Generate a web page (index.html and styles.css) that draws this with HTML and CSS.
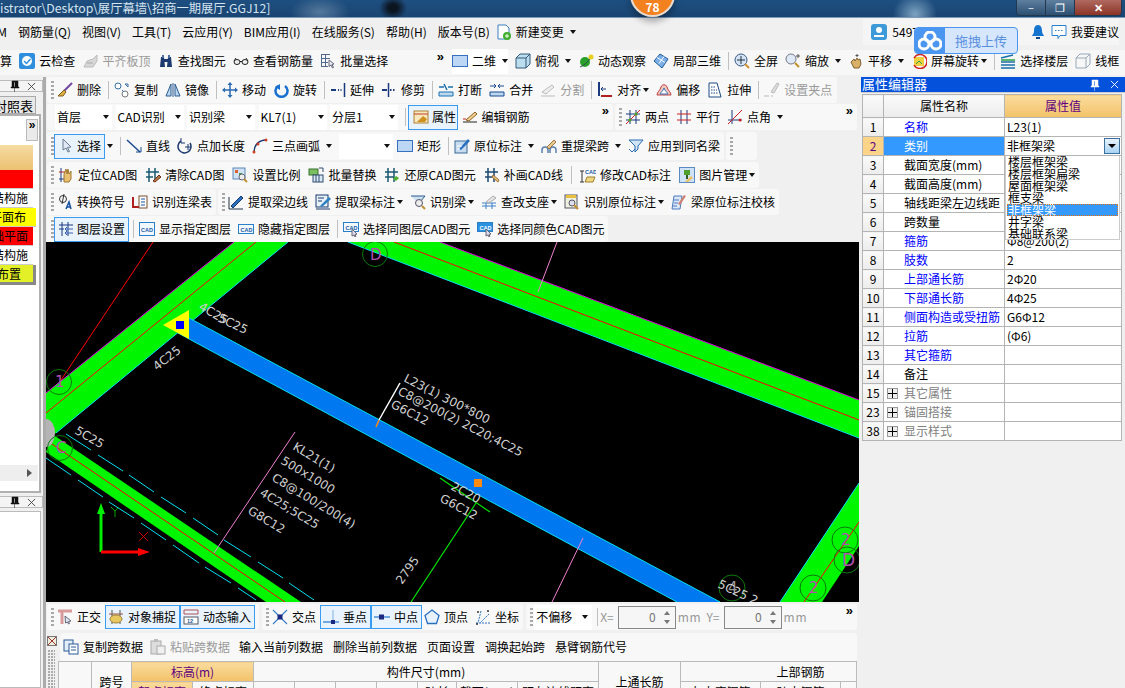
FILE: index.html
```html
<!DOCTYPE html>
<html lang="zh">
<head>
<meta charset="utf-8">
<title>GGJ12</title>
<link rel="stylesheet" href="styles.css">
</head>
<body>
<svg class="sprite" aria-hidden="true">
<symbol id="user" viewBox="0 0 16 16"><rect width="16" height="16" rx="3" fill="#3d9ad8"/><circle cx="8" cy="6" r="3" fill="#fff"/><path d="M3 13h10v-2H3z" fill="#fff"/></symbol>
<symbol id="doc" viewBox="0 0 16 16"><path d="M2 1h8l3 3v11H2z" fill="#fff" stroke="#3a7fc0"/><circle cx="11" cy="12" r="4" fill="#42b02c"/><path d="M9 12h4M11 10v4" stroke="#fff"/></symbol>
<symbol id="bell" viewBox="0 0 16 16"><path d="M8 1c3 0 4 3 4 6 0 3 2 4 2 5H2c0-1 2-2 2-5 0-3 1-6 4-6z" fill="#1474d0"/><rect x="6" y="13" width="4" height="2" fill="#0c4a90"/></symbol>
<symbol id="msg" viewBox="0 0 16 16"><path d="M1 1.500h14v10H9l-2 3v-3H1z" fill="#fff" stroke="#2a80d0"/><path d="M4 6.500h8" stroke="#2a80d0" stroke-dasharray="1.500 1.500"/></symbol>
<symbol id="chk" viewBox="0 0 16 16"><rect width="16" height="16" rx="2" fill="#2f8fdc"/><circle cx="8" cy="8" r="5" fill="#fff"/><path d="M5 8l2.500 2.500L11.500 6" fill="none" stroke="#2f8fdc" stroke-width="1.500"/></symbol>
<symbol id="flush" viewBox="0 0 16 16"><path d="M1 14l3-6 6-2 4-4v6l-4 6z" fill="#d8d8d8" stroke="#bbb"/><path d="M4 10h6" stroke="#aaa"/></symbol>
<symbol id="binoc" viewBox="0 0 16 16"><path d="M2 14l1-10h3l1 10zM9 14l1-10h3l1 10z" fill="#1c3a70"/><rect x="6" y="6" width="4" height="3" fill="#1c3a70"/><rect x="4" y="2" width="2" height="3" fill="#4a70a8"/><rect x="10" y="2" width="2" height="3" fill="#4a70a8"/></symbol>
<symbol id="glass" viewBox="0 0 16 16"><ellipse cx="4" cy="9" rx="3" ry="2.500" fill="#eee" stroke="#222"/><ellipse cx="12" cy="9" rx="3" ry="2.500" fill="#eee" stroke="#222"/><path d="M7 8.500h2M1 8l2-3M15 8l-2-3" stroke="#222"/></symbol>
<symbol id="batch" viewBox="0 0 16 16"><path d="M1 1.500h9M1 5.500h9M1 9.500h7M1 13.500h7M1.500 1v13M5.500 1v13" stroke="#51678c" fill="none"/><path d="M9 7l5 4-2 .5 1.500 3-1 .5-1.500-3-2 1.500z" fill="#e8eef8" stroke="#667"/></symbol>
<symbol id="rect" viewBox="0 0 16 16"><rect x=".5" y="2.500" width="15" height="11" fill="#bcd6f4" stroke="#3670c0"/></symbol>
<symbol id="cube" viewBox="0 0 16 16"><path d="M1 5l4-4h10v10l-4 4H1z" fill="#bcdcf0" stroke="#345a78"/><path d="M1 5h10v10M11 5l4-4" fill="none" stroke="#345a78"/></symbol>
<symbol id="orbit" viewBox="0 0 16 16"><circle cx="7" cy="9" r="5" fill="#2aa02a"/><path d="M2 14C6 13 12 7 14 2" stroke="#345" fill="none"/><circle cx="13" cy="4" r="2.500" fill="#e8d020"/></symbol>
<symbol id="local" viewBox="0 0 16 16"><path d="M1 8l6-7 8 5-6 9z" fill="#7ab0e8" stroke="#245a98"/><path d="M4 4.500l8 5M6 10.500l5-7" stroke="#fff"/></symbol>
<symbol id="full" viewBox="0 0 16 16"><circle cx="7" cy="7" r="6" fill="#d4e4f4" stroke="#3a5a88"/><path d="M7 3v8M3 7h8" stroke="#234"/><path d="M11 11l4 4" stroke="#d09030" stroke-width="2"/></symbol>
<symbol id="zoom" viewBox="0 0 16 16"><circle cx="6" cy="6" r="5" fill="#dfeaf6" stroke="#778"/><path d="M10 10l4 4" stroke="#c09020" stroke-width="2"/><path d="M13 1v4M11 3h4" stroke="#555"/></symbol>
<symbol id="pan" viewBox="0 0 16 16"><path d="M3 9l3-3 1 2 2-3 1 2 2-1 1 5-2 4H6z" fill="#d8b068" stroke="#806030"/><path d="M9 1v3M7.500 2.500h3" stroke="#555"/></symbol>
<symbol id="rot" viewBox="0 0 16 16"><rect x="3" y="4" width="10" height="9" fill="#f0d040"/><path d="M3 5a7 7 0 1 1 0 7" fill="none" stroke="#d02020" stroke-width="1.500"/><path d="M5 11l3-3 3 3" stroke="#30a040" fill="none"/></symbol>
<symbol id="floors" viewBox="0 0 16 16"><path d="M1 5l12-3M1 9h14M1 12h14M1 15h14" stroke="#1a70a8" stroke-width="1.500"/><path d="M1 7h14" stroke="#2aa040" stroke-width="1.500"/></symbol>
<symbol id="wire" viewBox="0 0 16 16"><path d="M1 5l4-4h10v10l-4 4H1zM1 5h10v10M11 5l4-4" fill="none" stroke="#98a8b8"/></symbol>
<symbol id="broom" viewBox="0 0 16 16"><path d="M15 1L7 9" stroke="#7048a0" stroke-width="2"/><path d="M7 8l2 2-3 4H1z" fill="#e0b040" stroke="#806020"/></symbol>
<symbol id="copy" viewBox="0 0 16 16"><circle cx="4" cy="4" r="3" fill="#fff" stroke="#3a70a8"/><circle cx="11" cy="12" r="3" fill="#fff" stroke="#777"/><path d="M8 8l2 2M11 2l3 3v-3z" stroke="#3a70a8" fill="none"/></symbol>
<symbol id="mirror" viewBox="0 0 16 16"><path d="M6 2v12H1zM10 2v12h5z" fill="#bcd8f0" stroke="#2a5a90"/><path d="M8 1v14" stroke="#2a5a90"/></symbol>
<symbol id="move" viewBox="0 0 16 16"><path d="M8 0l2.500 3h-5zM8 16l2.500-3h-5zM0 8l3-2.500v5zM16 8l-3-2.500v5z" fill="#2a6ab0"/><path d="M8 3v10M3 8h10" stroke="#2a6ab0" stroke-width="1.500"/></symbol>
<symbol id="rotate" viewBox="0 0 16 16"><path d="M12 4a6 6 0 1 1-7 0" fill="none" stroke="#1a70d0" stroke-width="2.500"/><path d="M2 5l5-3v6z" fill="#1a70d0"/></symbol>
<symbol id="extend" viewBox="0 0 16 16"><path d="M14.500 1v14" stroke="#1a3a80" stroke-width="1.500"/><path d="M1 8h5M8 8h1M10.500 8h1" stroke="#1a3a80" stroke-width="2"/></symbol>
<symbol id="trim" viewBox="0 0 16 16"><path d="M7.500 1v14" stroke="#1a3a80" stroke-width="1.500"/><path d="M1 8h5M9 8h1.500M12 8h1.500" stroke="#1a3a80" stroke-width="2"/></symbol>
<symbol id="brk" viewBox="0 0 16 16"><path d="M1 10h14v4H1z" fill="#bcd8f0" stroke="#1a70b0"/><path d="M1 5h5M10 5h5M6 2l3 6" stroke="#1a70b0" stroke-width="1.500"/></symbol>
<symbol id="merge" viewBox="0 0 16 16"><path d="M1 10h14v4H1z" fill="#bcd8f0" stroke="#1a4a90"/><path d="M1 4h5M10 4h5M5 2l2 2-2 2M11 2L9 4l2 2" stroke="#1a4a90" fill="none"/></symbol>
<symbol id="split" viewBox="0 0 16 16"><path d="M1 14h14M2 10l10-7 2 2-8 7z" fill="#eee" stroke="#bbb"/></symbol>
<symbol id="align" viewBox="0 0 16 16"><path d="M2 0v14" stroke="#1a3a80" stroke-width="2"/><path d="M4 14h11" stroke="#b02020" stroke-width="2"/><path d="M9 7H4l2-2M4 7l2 2" stroke="#1a3a80" fill="none"/></symbol>
<symbol id="offset" viewBox="0 0 16 16"><path d="M1 13c0-3 3-4 4-8 1-3 5-3 6 0 1 4 4 5 4 8z" fill="#f0c8c0" stroke="#c04040"/><path d="M4 12c1-2 3-3 4-6 1 3 3 4 4 6z" fill="#fff" stroke="#3a70b0"/></symbol>
<symbol id="stretch" viewBox="0 0 16 16"><path d="M2 1h8l4 14H2z" fill="#fff" stroke="#1a4a80"/><path d="M4 5h5M4 8h6M4 11h7" stroke="#1a4a80" stroke-dasharray="1.500 1"/></symbol>
<symbol id="grip2" viewBox="0 0 16 16"><path d="M0 14h5M7 14h2M10 11l5-9-2-1-6 9z" fill="#ddd" stroke="#bbb"/></symbol>
<symbol id="attr" viewBox="0 0 16 16"><rect x="1" y="2" width="14" height="12" fill="#f8e8c0" stroke="#b08030"/><path d="M1 5h14" stroke="#c04020"/><path d="M4 13l6-6 4 3-2 3z" fill="#d09020"/></symbol>
<symbol id="pen" viewBox="0 0 16 16"><path d="M1 13h14" stroke="#222"/><path d="M4 11l9-8 2 2-8 7z" fill="#f0d090" stroke="#906020"/><path d="M1 10h3" stroke="#c02020"/></symbol>
<symbol id="p2" viewBox="0 0 16 16"><path d="M1 5h14M1 11h14M5 1v14M11 1v14" stroke="#1a3a80"/><path d="M1 15L15 1" stroke="#d02020"/><circle cx="5" cy="11" r="1.500" fill="#50a020"/><circle cx="11" cy="5" r="1.500" fill="#50a020"/></symbol>
<symbol id="par" viewBox="0 0 16 16"><path d="M5 1v14M11 1v14" stroke="#1a3a80"/><path d="M1 5h14M1 11h14" stroke="#d02020"/></symbol>
<symbol id="ang" viewBox="0 0 16 16"><path d="M5 1v14M1 11h14" stroke="#1a3a80"/><path d="M1 15L15 1" stroke="#d02020"/><circle cx="13" cy="11" r="1.500" fill="#d02020"/></symbol>
<symbol id="cur" viewBox="0 0 16 16"><path d="M4 1l8 8-3.500.5 2 4-1.500.5-2-4L4 12z" fill="#dfe8f4" stroke="#6a7a90"/></symbol>
<symbol id="line" viewBox="0 0 16 16"><path d="M1 2l13 12" stroke="#1a4a90" stroke-width="1.500"/><path d="M10 14h5V9" stroke="#1a4a90" fill="none"/></symbol>
<symbol id="ptl" viewBox="0 0 16 16"><path d="M13 5a6.500 6.500 0 1 1-9-2" fill="none" stroke="#1a3a70" stroke-width="1.500"/><path d="M4 0v5h4M8 9h6M11 6v6" stroke="#1a3a70" fill="none"/></symbol>
<symbol id="arc" viewBox="0 0 16 16"><path d="M2 14C2 7 7 2 14 2" fill="none" stroke="#1a3a70" stroke-width="1.500"/><circle cx="2" cy="14" r="1.500" fill="#d04020"/><circle cx="6" cy="6" r="1.500" fill="#d04020"/><circle cx="14" cy="2" r="1.500" fill="#d04020"/></symbol>
<symbol id="note" viewBox="0 0 16 16"><rect x="1" y="3" width="12" height="12" fill="#c8dcf0" stroke="#3a6a98"/><path d="M5 11L14 1l2 2-9 9z" fill="#2a70c0"/><path d="M3 8h5M3 11h3" stroke="#fff"/></symbol>
<symbol id="span" viewBox="0 0 16 16"><path d="M1 15v-3a3 3 0 0 1 6 0v3M9 15v-3a3 3 0 0 1 6 0v3" fill="none" stroke="#5a80b0" stroke-width="1.500"/><path d="M6 9l7-7 2 2-7 7z" fill="#e8c890" stroke="#a07840"/></symbol>
<symbol id="funnel" viewBox="0 0 16 16"><path d="M1 2h14l-5 6v3l-3 3V8z" fill="#d0e4f6" stroke="#2a6ab0"/><path d="M1 11l3 3 3-3" fill="none" stroke="#2a6ab0"/></symbol>
<symbol id="loc" viewBox="0 0 16 16"><path d="M3 1v14M1 12h9" stroke="#1a3a80"/><path d="M1 5h6" stroke="#b02020"/><path d="M6 15V7l2-5 1 5 1-5 1 5 2-3v8l-2 3z" fill="#e8c070" stroke="#a07830"/></symbol>
<symbol id="clr" viewBox="0 0 16 16"><path d="M4 1v14M10 1v14M1 5h13M1 10h7" stroke="#1a5a70" stroke-width="1.500"/><path d="M8 14l6-6 2 2-6 5z" fill="#b07840" stroke="#703020"/></symbol>
<symbol id="scale" viewBox="0 0 16 16"><rect x="1" y="1" width="12" height="11" fill="#cfe2f6" stroke="#5a88b8"/><rect x="3" y="3" width="3" height="3" fill="#e06030"/><rect x="7" y="6" width="3" height="3" fill="#40a040"/><circle cx="10" cy="10" r="3" fill="#eee" stroke="#667"/><path d="M12 12l3 3" stroke="#c09030" stroke-width="2"/></symbol>
<symbol id="repl" viewBox="0 0 16 16"><rect x="1" y="2" width="9" height="6" fill="#7ac060" stroke="#3a7030"/><rect x="5" y="8" width="10" height="7" fill="#d8e8f4" stroke="#304a70"/><path d="M8 8v7M11 8v7" stroke="#304a70"/><path d="M11 1h4v4" fill="none" stroke="#304a70"/></symbol>
<symbol id="rest" viewBox="0 0 16 16"><path d="M4 1v14M10 1v14M1 5h13M1 10h9" stroke="#1a5a70" stroke-width="1.500"/><path d="M9 12l3-3 3 2-3 3z" fill="#50b030"/></symbol>
<symbol id="patch" viewBox="0 0 16 16"><path d="M4 1v14M10 1v14M1 5h13M1 10h9" stroke="#1a4a70" stroke-width="1.500"/><path d="M8 10l6 5 1-2-6-5z" fill="#e8c080" stroke="#a07030"/></symbol>
<symbol id="mod" viewBox="0 0 16 16"><path d="M2 4v11M0 4h4M0 15h4" stroke="#333"/><text x="5" y="7" class="ict">CAD</text><path d="M5 15l2-5h8l-2 5z" fill="#f0d880" stroke="#a08030"/></symbol>
<symbol id="pic" viewBox="0 0 16 16"><rect x=".5" y=".5" width="15" height="15" fill="#cfe2f8" stroke="#5a8ac0"/><path d="M5 3h6v5H5z" fill="#50a030"/><path d="M8 8v4" stroke="#306020" stroke-width="2"/><path d="M6 15l6-6 2 2-5 4z" fill="#f0c060"/></symbol>
<symbol id="phi" viewBox="0 0 16 16"><circle cx="6" cy="5" r="3.500" fill="none" stroke="#333"/><path d="M7 0L5 10" stroke="#333"/><path d="M9 15l3-7 2 7M10 13h3" stroke="#1a50a0" stroke-width="1.500" fill="none"/></symbol>
<symbol id="ltable" viewBox="0 0 16 16"><path d="M1 3v10h8" fill="none" stroke="#b02020" stroke-width="2"/><rect x="7" y="2" width="8" height="12" fill="#fff" stroke="#7a5030"/><path d="M9 5h4M9 8h4M9 11h4" stroke="#1a50a0"/></symbol>
<symbol id="edge" viewBox="0 0 16 16"><path d="M1 15h14M1 3v12" stroke="#234"/><path d="M3 12L13 2l2 2L5 14z" fill="#2a70c0" stroke="#1a3a70"/></symbol>
<symbol id="lbl" viewBox="0 0 16 16"><rect x="1" y="1" width="12" height="12" fill="#e8f0f8" stroke="#1a3a70"/><path d="M3 4h6M3 7h4M1 15h14" stroke="#1a3a70"/><path d="M5 12L14 3l2 2-9 8z" fill="#2a80c0"/></symbol>
<symbol id="rbeam" viewBox="0 0 16 16"><path d="M1 2h14l-5 6v3" fill="#cfe0f0" stroke="#2a5a90"/><circle cx="9" cy="9" r="3.500" fill="#eee" stroke="#556"/><path d="M12 12l3 3" stroke="#c09030" stroke-width="2"/></symbol>
<symbol id="supp" viewBox="0 0 16 16"><path d="M1 9h14M1 12h14" stroke="#3a80c8"/><path d="M5 9v6M11 9v6" stroke="#3a80c8"/><path d="M5 8l7-6 3 2-7 5z" fill="#e4e4e4" stroke="#aaa"/></symbol>
<symbol id="rorig" viewBox="0 0 16 16"><rect x="1" y="1" width="12" height="13" fill="#f0f0e0" stroke="#556"/><rect x="2" y="1" width="10" height="3" fill="#e8c040"/><circle cx="8" cy="9" r="3" fill="#dde" stroke="#556"/><path d="M10 11l4 4" stroke="#c09030" stroke-width="2"/></symbol>
<symbol id="chkb" viewBox="0 0 16 16"><path d="M3 2h8l-2 13H1z" fill="#dce8f8" stroke="#4a7ac0"/><path d="M3 6h5M3 9h4M2 12h4" stroke="#4a7ac0"/><path d="M7 10l6-9 2 1-6 9z" fill="#d08070"/></symbol>
<symbol id="layer" viewBox="0 0 16 16"><path d="M4 1v14M10 1v14" stroke="#1a3a80"/><path d="M1 4h14M1 8h5" stroke="#1a3a80"/><path d="M7 8h8M7 12h8" stroke="#3a60b0"/><path d="M9 6L7 8l2 2M9 10l-2 2 2 2" fill="none" stroke="#3a60b0"/></symbol>
<symbol id="cad1" viewBox="0 0 16 16"><rect x=".5" y="1.500" width="15" height="13" fill="#f0f7ff" stroke="#2a80c8"/><text x="2" y="11" class="ict">CAD</text></symbol>
<symbol id="cad2" viewBox="0 0 16 16"><rect x=".5" y="3.500" width="15" height="9" fill="#f0f7ff" stroke="#2a80c8"/><text x="2.500" y="10.500" class="ict">CAD</text></symbol>
<symbol id="cad3" viewBox="0 0 16 16"><rect x=".5" y="1.500" width="15" height="9" fill="#f0f7ff" stroke="#2a80c8"/><text x="2.500" y="8.500" class="ict">CAD</text><path d="M9 8l5 5-2 .5 1 2-1 .5-1-2-2 1z" fill="#dde" stroke="#667"/></symbol>
<symbol id="cad4" viewBox="0 0 16 16"><rect x=".5" y="1.500" width="15" height="9" fill="#2a90e0" stroke="#2a80c8"/><text x="2.500" y="8.500" class="ict icw">CAD</text><path d="M9 8l5 5-2 .5 1 2-1 .5-1-2-2 1z" fill="#dde" stroke="#667"/></symbol>
<symbol id="ortho" viewBox="0 0 16 16"><path d="M1 2h14M5 2v13" stroke="#d89a9a" stroke-width="3" fill="none"/><path d="M8 7l6 5-2.500.5 1 2-1 .5-1-2-2 1z" fill="#dfe8f4" stroke="#667"/></symbol>
<symbol id="snap" viewBox="0 0 16 16"><path d="M1 5h14" stroke="#a05030"/><path d="M4 1v14M12 1v14" stroke="#555"/><ellipse cx="8" cy="10" rx="6" ry="4" fill="#e8c860" stroke="#a08030"/></symbol>
<symbol id="dyn" viewBox="0 0 16 16"><path d="M1 1h14M1 5h14M1 1v4M15 1v4" stroke="#b05050" fill="none"/><rect x="1" y="8" width="14" height="7" fill="#fff" stroke="#556"/><text x="4" y="14" class="ict">12</text></symbol>
<symbol id="cross" viewBox="0 0 16 16"><path d="M1 1l14 14M15 1L1 15" stroke="#3a80c8" stroke-width="1.200"/><rect x="5.500" y="5.500" width="5" height="5" fill="#1a2a80"/></symbol>
<symbol id="perp" viewBox="0 0 16 16"><path d="M0 13h16" stroke="#4a90d8" stroke-width="1.500"/><path d="M10 1v14" stroke="#7ab0e0"/><rect x="8" y="11" width="4" height="4" fill="#1a2a80"/></symbol>
<symbol id="mid" viewBox="0 0 16 16"><path d="M0 8h16" stroke="#4a90d8" stroke-width="1.500"/><rect x="5" y="5.500" width="5" height="5" fill="#1a2a80"/></symbol>
<symbol id="vert" viewBox="0 0 16 16"><path d="M8 1l7 5.500-2.500 8h-9L1 6.500z" fill="#e8f2fc" stroke="#2a70c0" stroke-width="1.300"/></symbol>
<symbol id="coord" viewBox="0 0 16 16"><path d="M1 14h14M6 2l-3 12M14 5L5 14" stroke="#2a70c0" fill="none" stroke-dasharray="2 1"/><circle cx="3" cy="3" r="1" fill="#333"/><circle cx="13" cy="2" r="1" fill="#333"/><circle cx="2" cy="15" r="1" fill="#333"/></symbol>
<symbol id="cp" viewBox="0 0 16 16"><rect x="1" y="1" width="9" height="11" fill="#e4eefa" stroke="#2a5a98"/><rect x="6" y="5" width="9" height="10" fill="#fff" stroke="#2a5a98"/><path d="M8 8h5M8 11h5" stroke="#2a5a98"/></symbol>
<symbol id="ps" viewBox="0 0 16 16"><rect x="1" y="2" width="10" height="13" fill="#ddd" stroke="#aaa"/><rect x="7" y="7" width="8" height="8" fill="#f0f0f0" stroke="#aaa"/><rect x="4" y="0" width="4" height="3" fill="#bbb"/></symbol>
<symbol id="pin" viewBox="0 0 10 12"><path d="M2 1h6v6h1v1H1V7h1zM4 2v5h1V2zM4.500 8v4" fill="currentColor" stroke="currentColor" stroke-width=".5"/></symbol>
<symbol id="x" viewBox="0 0 10 10"><path d="M1 1l8 8M9 1L1 9" stroke="currentColor"/></symbol>
</svg>

<header class="title">
  <span class="title-text">istrator\Desktop\展厅幕墙\招商一期展厅.GGJ12]</span>
  <div class="winctl"><span class="wb">&#8211;</span><span class="wb">&#10064;</span><span class="wb wclose">&#10005;</span></div>
</header>
<div class="badge">78</div>

<nav class="menu">
  <span class="mi clip">M)</span>
  <span class="mi">钢筋量(Q)</span><span class="mi">视图(V)</span><span class="mi">工具(T)</span><span class="mi">云应用(Y)</span><span class="mi">BIM应用(I)</span><span class="mi">在线服务(S)</span><span class="mi">帮助(H)</span><span class="mi">版本号(B)</span>
  <span class="it mnew"><svg class="ic"><use href="#doc"/></svg>新建变更<i class="car"></i></span>
  <span class="menu-right">
    <svg class="ic"><use href="#user"/></svg><span>5497</span>
    <svg class="ic bellic"><use href="#bell"/></svg>
    <span class="it"><svg class="ic"><use href="#msg"/></svg>我要建议</span>
  </span>
</nav>
<div class="upload"><span class="up-logo"><svg width="24" height="20" viewBox="0 0 24 20"><circle cx="12" cy="6" r="5" fill="none" stroke="#fff" stroke-width="3"/><circle cx="6" cy="13" r="5" fill="none" stroke="#fff" stroke-width="3"/><circle cx="18" cy="13" r="5" fill="none" stroke="#fff" stroke-width="3"/></svg></span><span class="up-text">拖拽上传</span></div>

<div class="tb0">
  <span class="bar0">
    <span class="t-clip">算</span>
    <span class="it"><svg class="ic"><use href="#chk"/></svg>云检查</span>
    <span class="it off"><svg class="ic"><use href="#flush"/></svg>平齐板顶</span>
    <span class="it"><svg class="ic"><use href="#binoc"/></svg>查找图元</span>
    <span class="it"><svg class="ic"><use href="#glass"/></svg>查看钢筋量</span>
    <span class="it"><svg class="ic"><use href="#batch"/></svg>批量选择</span>
    <span class="more">»</span>
  </span>
  <span class="bar0 bar0b">
    <span class="it view2d"><svg class="ic"><use href="#rect"/></svg>二维<i class="car"></i></span>
    <span class="it"><svg class="ic"><use href="#cube"/></svg>俯视<i class="car"></i></span>
    <span class="it"><svg class="ic"><use href="#orbit"/></svg>动态观察</span>
    <span class="it"><svg class="ic"><use href="#local"/></svg>局部三维</span>
    <i class="sep"></i>
    <span class="it"><svg class="ic"><use href="#full"/></svg>全屏</span>
    <span class="it"><svg class="ic"><use href="#zoom"/></svg>缩放<i class="car"></i></span>
    <span class="it"><svg class="ic"><use href="#pan"/></svg>平移<i class="car"></i></span>
    <span class="it"><svg class="ic"><use href="#rot"/></svg>屏幕旋转<i class="car nar"></i></span>
    <i class="sep"></i>
    <span class="it"><svg class="ic"><use href="#floors"/></svg>选择楼层</span>
    <span class="it"><svg class="ic"><use href="#wire"/></svg>线框</span>
  </span>
</div>

<main class="work">
  <aside class="left">
    <div class="lhead"><svg class="pin"><use href="#pin"/></svg><svg class="xx"><use href="#x"/></svg></div>
    <div class="ltab">对照表</div>
    <div class="lbox">
      <div class="ltop"><span class="lmore">»</span></div>
      <div class="lr lr-o"></div>
      <div class="lr lr-r"></div>
      <div class="lr">结构施</div>
      <div class="lr lr-y">平面布</div>
      <div class="lr lr-r">础平面</div>
      <div class="lr">结构施</div>
      <div class="lr lr-s">布置</div>
      <div class="lsp"></div>
      <div class="lscroll"><i></i></div>
    </div>
    <div class="lhead lhead2"><svg class="pin"><use href="#pin"/></svg><svg class="xx"><use href="#x"/></svg></div>
    <div class="lbox2"></div>
  </aside>

  <section class="center">
    <div class="tb r1">
      <div class="bar">
        <i class="grip"></i>
        <span class="it"><svg class="ic"><use href="#broom"/></svg>删除</span><i class="sep"></i>
        <span class="it"><svg class="ic"><use href="#copy"/></svg>复制</span>
        <span class="it"><svg class="ic"><use href="#mirror"/></svg>镜像</span><i class="sep"></i>
        <span class="it"><svg class="ic"><use href="#move"/></svg>移动</span>
        <span class="it"><svg class="ic"><use href="#rotate"/></svg>旋转</span><i class="sep"></i>
        <span class="it"><svg class="ic"><use href="#extend"/></svg>延伸</span>
        <span class="it"><svg class="ic"><use href="#trim"/></svg>修剪</span><i class="sep"></i>
        <span class="it"><svg class="ic"><use href="#brk"/></svg>打断</span>
        <span class="it"><svg class="ic"><use href="#merge"/></svg>合并</span>
        <span class="it off"><svg class="ic"><use href="#split"/></svg>分割</span><i class="sep"></i>
        <span class="it"><svg class="ic"><use href="#align"/></svg>对齐<i class="car nar"></i></span>
        <span class="it"><svg class="ic"><use href="#offset"/></svg>偏移</span>
        <span class="it"><svg class="ic"><use href="#stretch"/></svg>拉伸</span><i class="sep"></i>
        <span class="it off"><svg class="ic"><use href="#grip2"/></svg>设置夹点</span>
      </div>
    </div>

    <div class="tb r2">
      <div class="bar bar-dd">
        <span class="dd">首层<i class="car"></i></span>
        <span class="dd">CAD识别<i class="car"></i></span>
        <span class="dd">识别梁<i class="car"></i></span>
        <span class="dd">KL7(1)<i class="car"></i></span>
        <span class="dd">分层1<i class="car"></i></span>
        <i class="sep"></i>
        <span class="it on attrb"><svg class="ic"><use href="#attr"/></svg>属性</span>
        <span class="it"><svg class="ic"><use href="#pen"/></svg>编辑钢筋</span>
        <span class="more">»</span>
      </div>
      <div class="bar bar-fill">
        <i class="grip"></i>
        <span class="it"><svg class="ic"><use href="#p2"/></svg>两点</span>
        <span class="it"><svg class="ic"><use href="#par"/></svg>平行</span>
        <span class="it"><svg class="ic"><use href="#ang"/></svg>点角<i class="car"></i></span>
        <span class="more">»</span>
      </div>
    </div>

    <div class="tb r3">
      <div class="bar">
        <i class="grip"></i>
        <span class="it on sel"><svg class="ic"><use href="#cur"/></svg>选择</span><i class="car selcar"></i><i class="sep"></i>
        <span class="it"><svg class="ic"><use href="#line"/></svg>直线</span>
        <span class="it"><svg class="ic"><use href="#ptl"/></svg>点加长度</span>
        <span class="it"><svg class="ic"><use href="#arc"/></svg>三点画弧<i class="car"></i></span>
        <span class="dd dd-empty"><i class="car"></i></span>
        <span class="it rectb"><svg class="ic"><use href="#rect"/></svg>矩形</span><i class="sep"></i>
        <span class="it"><svg class="ic"><use href="#note"/></svg>原位标注<i class="car"></i></span>
        <span class="it"><svg class="ic"><use href="#span"/></svg>重提梁跨<i class="car"></i></span>
        <span class="it"><svg class="ic"><use href="#funnel"/></svg>应用到同名梁</span>
      </div>
      <div class="bar bar-small"><i class="grip"></i></div>
    </div>

    <div class="tb r4">
      <div class="bar">
        <i class="grip"></i>
        <span class="it"><svg class="ic"><use href="#loc"/></svg>定位CAD图</span>
        <span class="it"><svg class="ic"><use href="#clr"/></svg>清除CAD图</span>
        <span class="it"><svg class="ic"><use href="#scale"/></svg>设置比例</span>
        <span class="it"><svg class="ic"><use href="#repl"/></svg>批量替换</span>
        <span class="it"><svg class="ic"><use href="#rest"/></svg>还原CAD图元</span>
        <span class="it"><svg class="ic"><use href="#patch"/></svg>补画CAD线</span><i class="sep"></i>
        <span class="it"><svg class="ic"><use href="#mod"/></svg>修改CAD标注</span>
        <span class="it"><svg class="ic"><use href="#pic"/></svg>图片管理<i class="car nar"></i></span>
      </div>
    </div>

    <div class="tb r5">
      <div class="bar">
        <i class="grip"></i>
        <span class="it"><svg class="ic"><use href="#phi"/></svg>转换符号</span>
        <span class="it"><svg class="ic"><use href="#ltable"/></svg>识别连梁表</span>
      </div>
      <div class="bar">
        <i class="grip"></i>
        <span class="it"><svg class="ic"><use href="#edge"/></svg>提取梁边线</span>
        <span class="it"><svg class="ic"><use href="#lbl"/></svg>提取梁标注<i class="car nar"></i></span>
        <span class="it"><svg class="ic"><use href="#rbeam"/></svg>识别梁<i class="car nar"></i></span>
        <span class="it"><svg class="ic"><use href="#supp"/></svg>查改支座<i class="car nar"></i></span>
        <span class="it"><svg class="ic"><use href="#rorig"/></svg>识别原位标注<i class="car nar"></i></span>
        <span class="it"><svg class="ic"><use href="#chkb"/></svg>梁原位标注校核</span>
      </div>
    </div>

    <div class="tb r6">
      <div class="bar">
        <i class="grip"></i>
        <span class="it on"><svg class="ic"><use href="#layer"/></svg>图层设置</span><i class="sep"></i>
        <span class="it"><svg class="ic"><use href="#cad1"/></svg>显示指定图层</span>
        <span class="it"><svg class="ic"><use href="#cad2"/></svg>隐藏指定图层</span><i class="sep"></i>
        <span class="it"><svg class="ic"><use href="#cad3"/></svg>选择同图层CAD图元</span>
        <span class="it"><svg class="ic"><use href="#cad4"/></svg>选择同颜色CAD图元</span>
      </div>
    </div>

    <svg class="cad" viewBox="46 242 813 360" width="813" height="360">
      <rect x="46" y="242" width="813" height="360" fill="#000"/>
      <path d="M153 242L59 383" class="red"/>
      <!-- upper left beam -->
      <polygon points="46,393 234,242 288,242 56,433 46,440" class="gb"/>
      <path d="M46 393L234 242" class="mag"/><path d="M56 433L288 242" class="cy"/>
      <path d="M46 413L256 242" class="red"/>
      <!-- lower left beam -->
      <polygon points="52,434 301,602 266,602 46,452" class="gb"/>
      <path d="M46 440L285 602" class="red"/>
      <path d="M66 434L91 450M98 455L123 471M129 475L154 492M161 497L186 513M193 518L218 535M224 540L251 557M258 562L283 578M289 583L314 600M46 458L71 475M78 480L103 497M109 502L134 518M141 523L166 540M173 545L199 563M205 567L231 583M238 588L256 600" class="cy"/>
      <ellipse cx="46" cy="433" rx="9" ry="14" fill="#b4b4b4"/>
      <!-- top right beam -->
      <polygon points="440,242 859,400 859,438 348,242" class="gb"/>
      <path d="M440 242L859 400" class="mag"/><path d="M348 242L859 438" class="cy"/>
      <path d="M394 242L859 420" class="red"/>
      <!-- bottom right beam -->
      <polygon points="859,483 780,602 822,602 859,546" class="gb"/>
      <path d="M859 483L780 602" class="cy"/>
      <path d="M859 522L804 602" class="red"/>
      <!-- selected beam -->
      <polygon points="189,318 720,602 677,602 178,333" fill="#0078f0"/>
      <path d="M189 318L720 602M178 333L677 602" class="cy"/>
      <polygon points="163,325 189,310 189,339" fill="#ffff00"/>
      <rect x="176" y="321" width="8" height="8" fill="#0000ff"/>
      <rect x="474" y="479" width="8" height="8" fill="#ff8a10"/>
      <!-- leaders -->
      <path d="M295 432L214 553M557 242L538 292M583 538L552 602" class="pink"/>
      <path d="M400 383L379 420" class="wh"/><path d="M379 420L376 427" class="or"/>
      <path d="M440 478L490 512M476 503L411 602" class="gr"/>
      <!-- axis marks -->
      <circle cx="375" cy="254" r="12.500" class="hex"/><text x="370" y="260" class="axis">D</text>
      <circle cx="59" cy="382" r="12.500" class="hex"/><text x="55" y="387" class="axis">1</text>
      <circle cx="60" cy="448" r="12.500" class="hex"/><text x="56" y="453" class="axis">C</text>
      <circle cx="845" cy="540" r="13" class="hex"/><text x="841" y="545" class="axis">2</text>
      <circle cx="847" cy="560" r="13" class="hex"/><text x="842" y="566" class="axis ax-b">D</text>
      <circle cx="813" cy="588" r="13" class="hex"/><text x="809" y="593" class="axis">2</text>
      <circle cx="732" cy="588" r="13" class="hex"/><text x="728" y="593" class="axis ax-g">4</text>
      <!-- UCS -->
      <path d="M101 552V508" stroke="#00ee00" stroke-width="3"/><polygon points="101,503 97,514 105,514" fill="#00ee00"/>
      <path d="M101 552H140" stroke="#f00" stroke-width="3"/><polygon points="150,552 138,548 138,556" fill="#f00"/>
      <path d="M111 507l4 4 4-4M115 511v6" class="ucs-y"/>
      <path d="M139 532l9 9M148 532l-9 9" class="ucs-x"/>
      <!-- labels -->
      <text transform="translate(198 309) rotate(30)">4C25</text>
      <text transform="translate(217 321) rotate(25)">5C25</text>
      <text transform="translate(157 371) rotate(-38)">4C25</text>
      <text transform="translate(74 433) rotate(30)">5C25</text>
      <text transform="translate(292 449) rotate(31)">KL21(1)</text>
      <text transform="translate(280 463) rotate(31)">500x1000</text>
      <text transform="translate(271 480) rotate(31)">C8@100/200(4)</text>
      <text transform="translate(259 495) rotate(31)">4C25;5C25</text>
      <text transform="translate(247 513) rotate(31)">G8C12</text>
      <text transform="translate(403 381) rotate(27)">L23(1) 300*800</text>
      <text transform="translate(397 394) rotate(27)">C8@200(2) 2C20;4C25</text>
      <text transform="translate(390 407) rotate(27)">G6C12</text>
      <text transform="translate(450 489) rotate(28)">2C20</text>
      <text transform="translate(439 501) rotate(28)">G6C12</text>
      <text transform="translate(402 585) rotate(-55)">2795</text>
      <text transform="translate(717 587) rotate(25)">5C25 2</text>
    </svg>

    <div class="tb snap">
      <div class="bar">
        <i class="grip"></i>
        <span class="it"><svg class="ic"><use href="#ortho"/></svg>正交</span>
        <span class="it on st"><svg class="ic"><use href="#snap"/></svg>对象捕捉</span>
        <span class="it on st"><svg class="ic"><use href="#dyn"/></svg>动态输入</span>
      </div>
      <div class="bar">
        <i class="grip"></i>
        <span class="it"><svg class="ic"><use href="#cross"/></svg>交点</span>
        <span class="it on st"><svg class="ic"><use href="#perp"/></svg>垂点</span>
        <span class="it on st"><svg class="ic"><use href="#mid"/></svg>中点</span>
        <span class="it vertb"><svg class="ic"><use href="#vert"/></svg>顶点</span>
        <span class="it"><svg class="ic"><use href="#coord"/></svg>坐标</span>
      </div>
      <div class="bar bar-fill bar-off">
        <i class="grip"></i>
        <span class="dd dd-off">不偏移<i class="car"></i></span>
        <i class="sep"></i>
        <span class="dim">X=</span>
        <span class="num">0<span class="spin"><i class="up"></i><i class="dn"></i></span></span>
        <span class="dim mm">mm</span>
        <span class="dim dim-y">Y=</span>
        <span class="num">0<span class="spin"><i class="up"></i><i class="dn"></i></span></span>
        <span class="dim mm">mm</span>
        <span class="more">»</span>
      </div>
    </div>

    <div class="dock">
      <div class="dock-side"><svg class="dock-x" viewBox="0 0 10 10"><rect x=".5" y=".5" width="9" height="9" fill="#eed" stroke="#777"/><path d="M1 1l8 8M9 1L1 9" stroke="#a03030"/></svg><i class="dock-dots"></i></div>
      <div class="dock-main">
        <div class="bar dock-bar">
          <span class="it"><svg class="ic"><use href="#cp"/></svg>复制跨数据</span>
          <span class="it off"><svg class="ic"><use href="#ps"/></svg>粘贴跨数据</span>
          <span class="dt dt-first">输入当前列数据</span>
          <span class="dt">删除当前列数据</span>
          <span class="dt">页面设置</span>
          <span class="dt">调换起始跨</span>
          <span class="dt">悬臂钢筋代号</span>
        </div>
        <div class="grid-wrap">
        <table class="grid">
          <colgroup><col class="c0"><col class="c1"><col class="c2"><col class="c2"><col class="c3"><col class="c3"><col class="c3"><col class="c3"><col class="c4"><col class="c5"><col class="c6"><col class="c7"><col class="c8"><col class="c8"><col class="c8"></colgroup>
          <tr><th rowspan="2"></th><th rowspan="2">跨号</th><th colspan="2" class="ohead">标高(m)</th><th colspan="7">构件尺寸(mm)</th><th rowspan="2">上通长筋</th><th colspan="3">上部钢筋</th></tr>
          <tr><th class="ohead">起点标高</th><th>终点标高</th><th></th><th></th><th></th><th></th><th>跨长</th><th>截面(mm)</th><th>距左边线距离</th><th>左支座钢筋</th><th>跨中钢筋</th><th></th></tr>
        </table>
        </div>
      </div>
    </div>
  </section>

  <aside class="right">
    <div class="phead"><span>属性编辑器</span><span class="phead-ic"><svg class="pin"><use href="#pin"/></svg><svg class="xx"><use href="#x"/></svg></span></div>
    <div class="pwrap">
      <table class="prop">
        <colgroup><col class="pc0"><col class="pc1"><col class="pc2"></colgroup>
        <tr class="ph"><th></th><th>属性名称</th><th class="ohead">属性值</th></tr>
        <tr><th>1</th><td class="lk">名称</td><td class="v">L23(1)</td></tr>
        <tr class="cur-row"><th>2</th><td class="nm">类别</td><td class="v vsel">非框架梁<i class="ddbtn"></i></td></tr>
        <tr><th>3</th><td>截面宽度(mm)</td><td></td></tr>
        <tr><th>4</th><td>截面高度(mm)</td><td></td></tr>
        <tr><th>5</th><td>轴线距梁左边线距</td><td></td></tr>
        <tr><th>6</th><td>跨数量</td><td></td></tr>
        <tr><th>7</th><td class="lk">箍筋</td><td class="v">Φ8@200(2)</td></tr>
        <tr><th>8</th><td class="lk">肢数</td><td class="v">2</td></tr>
        <tr><th>9</th><td class="lk">上部通长筋</td><td class="v">2Φ20</td></tr>
        <tr><th>10</th><td class="lk">下部通长筋</td><td class="v">4Φ25</td></tr>
        <tr><th>11</th><td class="lk">侧面构造或受扭筋</td><td class="v">G6Φ12</td></tr>
        <tr><th>12</th><td class="lk">拉筋</td><td class="v">(Φ6)</td></tr>
        <tr><th>13</th><td class="lk">其它箍筋</td><td></td></tr>
        <tr><th>14</th><td>备注</td><td></td></tr>
        <tr><th>15</th><td class="gy"><i class="plus"></i>其它属性</td><td></td></tr>
        <tr><th>23</th><td class="gy"><i class="plus"></i>锚固搭接</td><td></td></tr>
        <tr><th>38</th><td class="gy"><i class="plus"></i>显示样式</td><td></td></tr>
      </table>
      <ul class="drop">
        <li>楼层框架梁</li><li>楼层框架扁梁</li><li>屋面框架梁</li><li>框支梁</li><li class="dsel">非框架梁</li><li>井字梁</li><li>基础联系梁</li>
      </ul>
    </div>
  </aside>
</main>
</body>
</html>
```

FILE: styles.css
```css
* { box-sizing: border-box; }
html, body { margin: 0; padding: 0; }
body {
  width: 1125px; height: 688px; overflow: hidden; position: relative;
  background: #f0f0f0; color: #000;
  font: 12px/16px "Noto Sans CJK SC", "Liberation Sans", sans-serif;
}
i { font-style: normal; display: block; flex: none; }
.sprite { display: none; }
.ict { font: bold 5.5px "Liberation Sans", sans-serif; fill: #1a5aa0; }
.icw { fill: #fff; }

.title {
  height: 18px; display: flex; justify-content: space-between; color: #d6e4f0;
  background:
    radial-gradient(ellipse 14px 12px at 393px 8px, #0c1420 30%, transparent 100%),
    radial-gradient(ellipse 30px 16px at 320px 12px, #55799c, transparent),
    radial-gradient(ellipse 22px 20px at 915px 14px, #7da3c2, transparent),
    linear-gradient(#1e4f80, #1a4472);
  border-bottom: 1px solid #7d9ab8;
}
.title-text { font-size: 12.3px; line-height: 17px; white-space: nowrap; }
.winctl { display: flex; height: 16px; margin-right: 3px; border: 1px solid #22384e; border-top: 0; border-radius: 0 0 4px 4px; overflow: hidden; }
.wb { width: 29px; text-align: center; color: #fff; font-size: 11px; line-height: 14px; background: linear-gradient(#5f7f9e, #2c4f72); border-right: 1px solid #22384e; }
.wclose { width: 46px; border: 0; font-weight: bold; background: linear-gradient(#b06a60, #8c3328); }
.badge {
  position: absolute; left: 630px; top: -28px; width: 45px; height: 45px; border-radius: 50%;
  background: #f4811f; border: 2px solid #e8dcd0; color: #fff; font-weight: bold; font-size: 12px;
  text-align: center; padding-top: 26px; line-height: 14px; box-shadow: 0 5px 6px rgba(0,0,0,.28);
}

.menu { height: 28px; display: flex; align-items: center; position: relative; padding-right: 6px; }
.mi { margin-right: 11px; white-space: nowrap; }
.clip { width: 7px; overflow: hidden; direction: rtl; }
.mnew { margin-left: -5px; }
.menu-right { margin-left: auto; display: flex; align-items: center; gap: 5px; background: #f5f5f5; height: 26px; padding-left: 8px; }
.bellic { margin-left: 106px; }
.upload {
  position: absolute; left: 914px; top: 27px; width: 104px; height: 27px; display: flex;
  border: 1px solid #4a96f0; border-radius: 4px; overflow: hidden; background: #d6e6fc; color: #5a90e0; font-size: 13px;
}
.up-logo { width: 30px; background: #4a96f0; display: flex; align-items: center; justify-content: center; }
.up-text { flex: 1; text-align: center; line-height: 25px; }

.tb0 { height: 31px; display: flex; padding-top: 4px; padding-bottom: 2px; }
.bar0 { display: flex; align-items: center; gap: 7.25px; background: #f7f7f7; width: 449px; flex: none; padding-bottom: 3px; padding-right: 5px; }
.bar0b { flex: 1; width: auto; gap: 7px; padding-left: 3px; padding-right: 0; }
.t-clip { width: 12px; }
.view2d { background: #fff; height: 25px; }

.it { display: inline-flex; align-items: center; gap: 4px; white-space: nowrap; flex: none; }
.ic { width: 16px; height: 16px; flex: none; display: block; overflow: hidden; }
.off { color: #9a9a9a; }
.sep { width: 1px; height: 18px; background: #c0c0c0; flex: none; margin-right: -2px; }
.grip { width: 3px; height: 18px; flex: none; margin-right: -4px; background: repeating-linear-gradient(#a8a8a8 0 2px, transparent 2px 4px); }
.car { width: 0; height: 0; border: 3px solid transparent; border-top: 4px solid #111; border-bottom: 0; margin-left: 2px; flex: none; }
.nar { margin-left: -2px; }
.more { font: bold 13px/12px "Liberation Sans", sans-serif; margin-left: auto; align-self: flex-start; margin-top: 1px; }

.work { display: flex; height: 611px; }
.left { width: 46px; flex: none; border-right: 3px solid #ababab; display: flex; flex-direction: column; padding-top: 3px; overflow: hidden; }
.center { width: 813px; flex: none; display: flex; flex-direction: column; }
.right { width: 264px; margin-left: 2px; flex: none; overflow: hidden; }

.lhead { height: 12px; display: flex; justify-content: flex-end; align-items: center; gap: 7px; padding-right: 6px; border: 1px solid #bbb; border-left: 0; background: #f4f4f4; flex: none; }
.pin { width: 10px; height: 12px; color: #111; }
.xx { width: 9px; height: 9px; color: #444; }
.ltab { margin-top: 4px; width: 36px; height: 18px; border: 1px solid #aaa; border-left: 0; background: #e8e8e8; text-align: right; font-size: 13px; line-height: 17px; overflow: hidden; white-space: nowrap; direction: rtl; padding-right: 2px; flex: none; }
.lbox { width: 41px; height: 379px; border: 2px solid #b0b0b0; border-left: 0; background: #fff; display: flex; flex-direction: column; flex: none; }
.ltop { height: 29px; padding: 3px 1px 0 0; display: flex; justify-content: flex-end; align-items: flex-start; flex: none; }
.lmore { width: 12px; height: 22px; background: #eaeaea; border: 1px solid #bbb; font: bold 12px/10px "Liberation Sans", sans-serif; text-align: center; }
.lr { height: 19px; width: 33px; display: flex; justify-content: flex-end; align-items: center; white-space: nowrap; font-size: 12px; border-bottom: 1px solid #ccc; overflow: hidden; flex: none; padding-right: 5px; }
.lr-o { height: 25px; background: linear-gradient(#f6dca2, #ecc071); border-bottom: 0; }
.lr-r { background: #f00; }
.lr-y { background: #ff0; width: 36px; padding-right: 10px; }
.lr-s { background: #e3f028; width: 36px; height: 20px; padding-right: 12px; border-right: 3px solid #888; border-bottom: 3px solid #888; }
.lsp { flex: 1; }
.lscroll { height: 16px; margin-right: 1px; margin-bottom: 10px; background: #eee; display: flex; justify-content: flex-end; align-items: center; padding-right: 6px; flex: none; }
.lscroll i { border: 4px solid transparent; border-left: 5px solid #555; border-right: 0; }
.lhead2 { margin-top: 3px; }
.lbox2 { margin-top: 3px; flex: 1; width: 41px; background: #fff; border: 1px solid #bbb; border-left: 0; }

.tb { display: flex; height: 26px; gap: 2px; flex: none; }
.bar { display: flex; align-items: center; gap: 7px; background: #f8f8f8; border-radius: 3px; padding: 0 4px; height: 100%; margin-left: 1px; }
.tb .bar + .bar { margin-left: 0; }
.r1 { margin-bottom: 1px; }
.r2 { margin-bottom: 2px; }
.r3 { height: 28px; margin-bottom: 2px; }
.r4 { margin-bottom: 1px; }
.r4 .bar { gap: 8px; }
.r4 .sep { margin-right: 0; }
.r5 { height: 26px; margin-bottom: 1px; }
.r6 { height: 26px; }
.r1 .bar { width: 790px; }
.bar-dd { width: 566px; padding-left: 8px; gap: 3.5px; }
.bar-fill { flex: 1; margin-right: 2px; }
.bar-small { width: 31px; }
.dd { display: flex; align-items: center; justify-content: space-between; width: 68px; height: 25px; background: #fff; padding-left: 2px; padding-right: 3px; flex: none; }
.r2 .dd:first-child { width: 57px; }
.r2 .sep { margin: 0 -1px 0 3px; }
.dd .car { margin-left: 0; }
.dd-empty { width: 54px; justify-content: flex-end; }
.on { border: 1px solid #3a9cf0; background: #e9f3fd; height: 25px; padding: 0 3px; gap: 3px; }
.grip + .on { margin-left: -3px; }
.on + .sep { margin-left: -3px; }
.attrb { padding: 0 1px 0 4px; width: 50px; }
.sel { width: 51px; gap: 2px; padding-left: 4px; }
.selcar { margin-left: -5px; }
.rectb { margin-left: -3px; }
.st { height: 24px; padding: 0 3px 0 2px; margin-left: -3px; gap: 4px; }
.st + .st { margin-left: -7px; }
.vertb { margin-left: -5px; }

.cad { display: block; flex: none; }
.cad text { font: 12px "DejaVu Sans", sans-serif; fill: #d0d0d0; }
.cad .axis { font-size: 15px; fill: #b050b0; }
.cad .ax-b { font-size: 17px; }
.cad .ax-g { fill: #999; }
.cad path { fill: none; }
.cad .gb { fill: #00f500; }
.red { stroke: #f00; stroke-width: 1; }
.mag { stroke: #e000e0; stroke-width: 1; }
.cy { stroke: #00e0f0; stroke-width: 1; }
.pink { stroke: #f080d0; stroke-width: 1; }
.wh { stroke: #fff; stroke-width: 1.5; }
.or { stroke: #ff8a10; stroke-width: 1.5; }
.gr { stroke: #00e000; stroke-width: 1.2; }
.hex { fill: none; stroke: #0a7a0a; stroke-width: 1; }
.ucs-y { stroke: #00a000; }
.ucs-x { stroke: #d00000; }

.snap { height: 30px; gap: 3px; padding-top: 2px; padding-bottom: 2px; }
.snap .bar { height: 26px; }
.bar-off { gap: 3px; margin-right: 2px; }
.bar-off .grip { margin-right: -2px; }
.bar-off .sep { margin: 0 -1px 0 2px; }
.dd-off { width: 58px; padding-left: 2px; padding-right: 4px; }
.dim { color: #999; }
.mm { letter-spacing: .8px; }
.dim-y { margin-left: 2px; }
.num { width: 58px; height: 23px; border: 1px solid #888; background: #f6f6f6; display: flex; align-items: center; justify-content: flex-end; color: #777; gap: 8px; padding-right: 4px; margin: 0 -1px 0 1px; flex: none; }
.spin { width: 7px; display: flex; flex-direction: column; gap: 5px; }
.spin i { width: 0; height: 0; border: 3px solid transparent; border-top: 0; }
.spin .up { border-bottom: 4px solid #777; }
.spin .dn { border-bottom: 0; border-top: 4px solid #777; }

.dock { flex: 1; display: flex; min-height: 0; overflow: hidden; }
.dock-side { width: 12px; flex: none; padding: 4px 0 0 1px; }
.dock-x { width: 10px; height: 10px; display: block; }
.dock-dots { height: 40px; width: 7px; margin: 4px 0 0 1px; background: radial-gradient(circle at 1px 1px, #aaa 1px, transparent 1.5px) 0 0/3px 3px; }
.dock-main { flex: 1; min-width: 0; }
.dock-bar { height: 28px; margin: 1px 2px 0 2px; gap: 5px; padding: 0 3px; }
.dock-bar .it { margin-right: 2px; }
.dt { margin-left: 5px; white-space: nowrap; }
.dt-first { margin-left: 2px; }
.grid-wrap { width: 799px; overflow: hidden; border-right: 1px solid #bbb; }
.grid { border-collapse: collapse; table-layout: fixed; width: 862px; background: #f8f8f8; border: 1px solid #bbb; }
.grid th { font-weight: 400; font-size: 12px; height: 20px; padding: 0; border: 1px solid #bbb; text-align: center; overflow: hidden; white-space: nowrap; line-height: 16px; }
.grid .ohead { color: #600080; }
.c0 { width: 33px; } .c1 { width: 40px; } .c2 { width: 61px; } .c3 { width: 41px; }
.c4 { width: 39px; } .c5 { width: 61px; } .c6 { width: 81px; } .c7 { width: 82px; } .c8 { width: 80px; }
.ohead { background: linear-gradient(#fadc9e, #f3c268); }

.phead { height: 15px; background: #0452dc; color: #fff; font-size: 13px; line-height: 14px; display: flex; justify-content: space-between; padding: 0 6px 0 1px; }
.phead-ic { display: flex; align-items: center; gap: 10px; }
.phead .pin, .phead .xx { color: #fff; }
.pwrap { position: relative; padding: 1px 3px 0 1px; border-top: 1px solid #ccc; }
.prop { width: 259px; border-collapse: collapse; table-layout: fixed; background: #fff; border: 1px solid #b4b4b4; }
.pc0 { width: 21px; } .pc1 { width: 121px; } .pc2 { width: 117px; }
.prop th, .prop td { height: 19px; padding: 0; border: 1px solid #b4b4b4; font-weight: 400; line-height: 16px; white-space: nowrap; overflow: hidden; }
.prop th { background: linear-gradient(#fafafa, #ececec); text-align: center; }
.prop .ph th { height: 23px; text-align: center; }
.prop .ph .ohead { color: #600080; background: linear-gradient(#fadc9e, #f3c268); }
.prop td { padding-left: 20px; }
.prop td.v { padding-left: 2px; }
.prop .lk { color: #0000ff; }
.prop .gy { color: #808080; padding-left: 3px; }
.plus { display: inline-block; width: 11px; height: 11px; margin-right: 6px; vertical-align: -1px; border: 1px solid #999; background: linear-gradient(to right, transparent 4px, #000 4px, #000 5px, transparent 5px) 0 0/9px 9px no-repeat, linear-gradient(transparent 4px, #000 4px, #000 5px, transparent 5px) 0 0/9px 9px no-repeat, #eee; }
.cur-row th { background: #fbd488; color: #600080; }
.prop .nm { background: #3399ff; color: #fff; }
.vsel { position: relative; }
.ddbtn { position: absolute; right: 1px; top: 1px; width: 16px; height: 16px; border: 1px solid #3a70a0; background: linear-gradient(#e8f3fc, #a8d4f2); }
.ddbtn::after { content: ""; position: absolute; left: 3px; top: 5px; border: 4px solid transparent; border-top: 4px solid #000; border-bottom: 0; }
.drop {
  position: absolute; left: 144px; top: 63px; width: 115px; height: 84px; margin: 0; padding: 0 1px; list-style: none;
  background: #fff; border: 1px solid #ccc; border-top: 0; overflow: hidden;
}
.drop li { height: 12px; line-height: 12px; padding-left: 1px; white-space: nowrap; }
.drop .dsel { background: #3399ff; color: #fff; outline: 1px dotted #e87010; outline-offset: -1px; }
```
